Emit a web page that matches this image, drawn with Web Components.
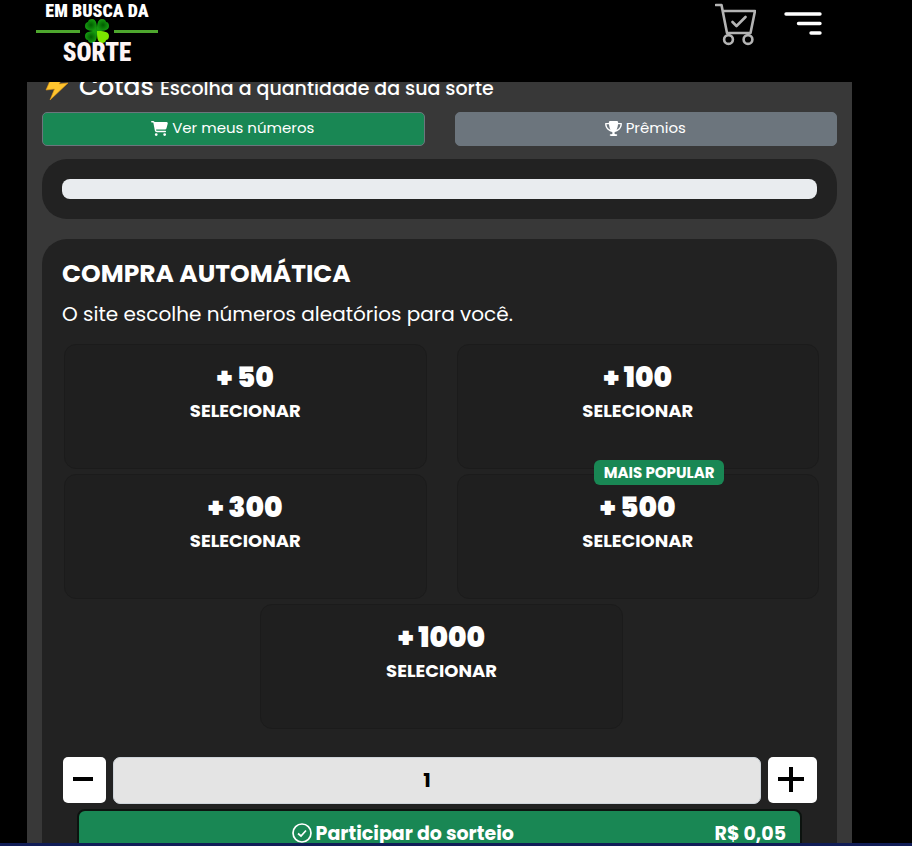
<!DOCTYPE html>
<html lang="pt-BR">
<head>
<meta charset="utf-8">
<meta name="viewport" content="width=device-width, initial-scale=1">
<title>Em Busca da Sorte</title>
<style>
  html { height: 100%; overflow: hidden; background: #000; }
  body { margin: 0; height: 100%; overflow: hidden; background: #000; color: #fff; font-family: Poppins, Inter, "Open Sans", sans-serif; }
</style>
</head>
<body>
<raffle-page></raffle-page>
<script>
const define = (name, html, setup) => {
  const template = document.createElement('template');
  template.innerHTML = html;
  customElements.define(name, class extends HTMLElement {
    constructor() {
      super();
      this.attachShadow({ mode: 'open' }).append(template.content.cloneNode(true));
    }
    connectedCallback() { if (setup) setup(this, this.shadowRoot); }
  });
};

define('site-logo', `
<style>
  :host { display: block; width: 122px; }
  a { display: flex; flex-direction: column; align-items: center; color: #fdf4f4; text-decoration: none; font-family: "Roboto Condensed", "Open Sans Condensed", Lato, sans-serif; font-weight: 900; white-space: nowrap; }
  .top { font-size: 18px; line-height: 22px; color: #fff; }
  .mid { display: flex; align-items: center; gap: 5px; width: 100%; height: 18px; }
  .mid i { flex: 1; height: 3px; background: #4ea72e; }
  .bottom { font-size: 25px; line-height: 25px; }
  svg { flex: none; margin: -3px 0; }
</style>
<a href="#">
  <span class="top">EM BUSCA DA</span>
  <span class="mid"><i></i>
    <svg width="24" height="24" viewBox="0 0 24 24" aria-hidden="true">
      <defs><radialGradient id="g"><stop offset="0" stop-color="#005c00"/><stop offset="1" stop-color="#159a10"/></radialGradient></defs>
      <g fill="url(#g)">
        <path d="M12 12C7 12 0 12 0 7C0 4 2 3 3 3C3 1 5 0 7 0C12 0 12 7 12 12Z"/>
        <path d="M12 12C12 7 12 0 17 0C20 0 21 2 21 3C23 3 24 5 24 7C24 12 17 12 12 12Z"/>
        <path d="M12 12C12 17 12 24 7 24C4 24 3 22 3 21C1 21 0 19 0 17C0 12 7 12 12 12Z"/>
      </g>
      <path fill="#7be800" d="M12 12C17 12 24 12 24 17C24 20 22 21 21 21C21 23 19 24 17 24C12 24 12 17 12 12Z"/>
    </svg>
  <i></i></span>
  <span class="bottom">SORTE</span>
</a>`);

define('site-header', `
<style>
  :host { display: flex; box-sizing: border-box; height: 82px; padding: 0 90px 0 36px; justify-content: space-between; align-items: flex-start; background: #000; }
  nav { display: flex; gap: 28px; padding-top: 3px; }
  button { display: block; padding: 0; border: 0; background: none; color: inherit; cursor: pointer; }
  svg { display: block; fill: none; stroke-linecap: round; stroke-linejoin: round; }
</style>
<site-logo></site-logo>
<nav>
  <button aria-label="Carrinho"><svg width="41" height="43" viewBox="0 0 41 43" stroke="#b4b4b4" stroke-width="2.6">
    <path d="M1 2H6.500L12 30H35.500L40 8H8M17.500 19L21.500 23L30.500 14"/><circle cx="13.500" cy="36.500" r="4.400"/><circle cx="33" cy="36.500" r="4.400"/></svg></button>
  <button aria-label="Menu"><svg width="38" height="43" viewBox="0 0 38 43" stroke="#fff" stroke-width="3.400"><path d="M2 11H36M14.500 20.500H36M27 30H36"/></svg></button>
</nav>`);

define('icon-button', `
<style>
  :host { display: block; }
  button { display: flex; box-sizing: border-box; width: 100%; height: 34px; align-items: center; justify-content: center; gap: 4px; padding: 0 9px 2px 8px; border: 1px solid #6c757d; border-radius: 5px; background: var(--fill); color: #fff; font: 400 15px/22px Poppins, Inter, sans-serif; cursor: pointer; }
  ::slotted(svg) { width: 17px; height: 15px; fill: currentColor; }
</style>
<button><slot name="icon"></slot><span><slot></slot></span></button>`);

define('dark-panel', `
<style>:host { display: block; padding: 20px; border-radius: 25px; background: #222; }</style><slot></slot>`);

define('quota-card', `
<style>
  :host { display: block; position: relative; box-sizing: border-box; }
  button { display: flex; flex-direction: column; align-items: center; box-sizing: border-box; width: 100%; height: 125px; padding: 16px 8px; border: 1px solid #1b1b1b; border-radius: 12px; background: #1f1f1f; color: #fff; font-family: Poppins, Inter, sans-serif; cursor: pointer; }
  .amount { font-size: 28px; line-height: 34px; font-weight: 900; }
  .label { font-size: 18px; line-height: 32px; font-weight: 700; }
  .badge { position: absolute; top: -14px; left: calc(50% - 44px); padding: 0 10px; border-radius: 6px; background: #198754; font-size: 15px; line-height: 25px; font-weight: 700; white-space: nowrap; }
  .badge:empty { display: none; }
</style>
<button><span class="amount"><slot></slot></span><span class="label">SELECIONAR</span></button><span class="badge"></span>`,
(host, root) => { root.querySelector('.badge').textContent = host.getAttribute('badge') || ''; });

define('quantity-picker', `
<style>
  :host { display: flex; gap: 7px; height: 47px; padding-left: 1px; }
  button { display: grid; place-items: center; box-sizing: border-box; width: 43px; height: 46px; padding: 0 3px 0 0; border: 0; border-radius: 5px; background: #fff; cursor: pointer; }
  button:last-child { width: 49px; }
  input { flex: 1; min-width: 0; box-sizing: border-box; height: 47px; padding: 0 20px 2px 0; border: 1px solid #ced4da; border-radius: 7px; background: #e4e4e4; color: #000; text-align: center; font: 700 20px/28px Poppins, Inter, sans-serif; }
  svg { stroke: #000; stroke-width: 4; }
</style>
<button aria-label="Diminuir"><svg width="20" height="26" viewBox="0 0 20 26"><path d="M0 12H20"/></svg></button>
<input aria-label="Quantidade" type="text" value="1">
<button aria-label="Aumentar"><svg width="26" height="26" viewBox="0 0 26 26"><path d="M0 12H26M13 0V25"/></svg></button>`);

define('join-button', `
<style>
  :host { display: block; }
  button { display: flex; align-items: center; width: 100%; box-sizing: border-box; height: 50px; padding: 0 14px 0 12px; border: 2px solid #0c130f; border-radius: 8px; background: #198754; color: #fff; font: 700 19px/28px Poppins, Inter, sans-serif; cursor: pointer; }
  .main { display: flex; flex: 1; justify-content: center; align-items: center; gap: 4px; }
  svg { fill: none; stroke: #fff; stroke-width: 1.700; }
</style>
<button><span class="main"><svg width="20" height="22" viewBox="0 0 20 22"><circle cx="10" cy="10" r="9"/><path d="M6 10.500L9 13L14 7.500"/></svg><span>Participar do sorteio</span></span><span>R$ 0,05</span></button>`);

define('raffle-page', `
<style>
  :host { display: block; position: relative; height: 100%; overflow: hidden; }
  site-header { position: absolute; top: 0; left: 0; right: 0; z-index: 2; }
  main { box-sizing: border-box; min-height: 100%; margin: 0 60px 0 27px; padding: 72px 15px 0; background: #383838; }
  h1 { display: flex; align-items: baseline; gap: 6px; margin: 0 0 10px; padding-left: 3px; font-size: 25px; line-height: 30px; font-weight: 500; white-space: nowrap; }
  h1 small { font-size: 19px; line-height: 20px; }
  h1 svg { align-self: center; margin-right: 4px; }
  .actions { display: grid; grid-template-columns: 1fr 1fr; gap: 30px; margin-bottom: 13px; }
  .meter { height: 20px; border-radius: 8px; background: #e9ecef; }
  dark-panel + dark-panel { margin-top: 20px; }
  h2 { margin: 0; font-size: 25px; line-height: 30px; font-weight: 700; }
  p { margin: 10px 0 15px; font-size: 20px; line-height: 30px; }
  .cards { display: flex; flex-wrap: wrap; justify-content: center; gap: 5px 30px; margin: 0 -2px 28px 2px; }
  quota-card { flex: 0 0 calc(50% - 15px); }
  join-button { margin: 5px 15px 0; }
  footer { position: absolute; left: 0; right: 0; bottom: 0; height: 3px; background: #111d57; z-index: 2; }
</style>
<site-header></site-header>
<main>
  <h1><svg width="24" height="28" viewBox="0 0 24 28" aria-hidden="true"><path fill="#ffc52e" stroke="#e99b12" stroke-width=".6" d="M8 1L1 17L9.500 16L5 27L23 10L14 11L20 1Z"/></svg><span>Cotas</span><small>Escolha a quantidade da sua sorte</small></h1>
  <div class="actions">
    <icon-button style="--fill:#198754"><svg slot="icon" viewBox="0 0 576 512"><path d="M0 24C0 10.7 10.7 0 24 0H69.5c22 0 41.5 12.8 50.6 32h411c26.3 0 45.5 25 38.6 50.4l-41 152.3c-8.5 31.4-37 53.3-69.5 53.300H170.700l5.400 28.500c2.200 11.300 12.100 19.500 23.600 19.500H488c13.300 0 24 10.700 24 24s-10.700 24-24 24H199.700c-34.600 0-64.300-24.600-70.700-58.500L77.400 54.500c-.7-3.800-4-6.500-7.900-6.500H24C10.700 48 0 37.300 0 24zM128 464a48 48 0 1 1 96 0 48 48 0 1 1 -96 0zm336-48a48 48 0 1 1 0 96 48 48 0 1 1 0-96z"/></svg>Ver meus números</icon-button>
    <icon-button style="--fill:#6c757d"><svg slot="icon" viewBox="0 0 576 512"><path d="M400 0H176c-26.500 0-48.100 21.800-47.100 48.200c.2 5.300 .4 10.600 .7 15.800H24C10.700 64 0 74.700 0 88c0 92.600 33.500 157 78.500 200.700c44.300 43.100 98.300 64.800 138.100 75.800c23.400 6.500 39.400 26 39.400 45.600c0 20.900-17 37.900-37.900 37.900H192c-17.700 0-32 14.300-32 32s14.300 32 32 32H384c17.700 0 32-14.300 32-32s-14.300-32-32-32H357.900C337 448 320 431 320 410.100c0-19.600 15.900-39.200 39.400-45.600c39.900-11 93.900-32.700 138.200-75.800C542.500 245 576 180.600 576 88c0-13.300-10.700-24-24-24H446.400c.3-5.200 .5-10.400 .7-15.800C448.100 21.800 426.500 0 400 0zM48.900 112h84.400c9.100 90.100 29.200 150.300 51.900 190.600c-24.900-11-50.800-26.500-73.200-48.300c-32-31.100-58-76-63-142.300zM464.100 254.300c-22.400 21.800-48.300 37.300-73.200 48.300c22.700-40.300 42.800-100.500 51.900-190.600h84.400c-5.100 66.300-31.100 111.200-63 142.300z"/></svg>Prêmios</icon-button>
  </div>
  <dark-panel><div class="meter" role="progressbar" aria-label="Progresso" aria-valuenow="0"></div></dark-panel>
  <dark-panel>
    <h2>COMPRA AUTOMÁTICA</h2>
    <p>O site escolhe números aleatórios para você.</p>
    <div class="cards">
      <quota-card>+ 50</quota-card>
      <quota-card>+ 100</quota-card>
      <quota-card>+ 300</quota-card>
      <quota-card badge="MAIS POPULAR">+ 500</quota-card>
      <quota-card>+ 1000</quota-card>
    </div>
    <quantity-picker></quantity-picker>
    <join-button></join-button>
  </dark-panel>
</main>
<footer></footer>`);
</script>
</body>
</html>
